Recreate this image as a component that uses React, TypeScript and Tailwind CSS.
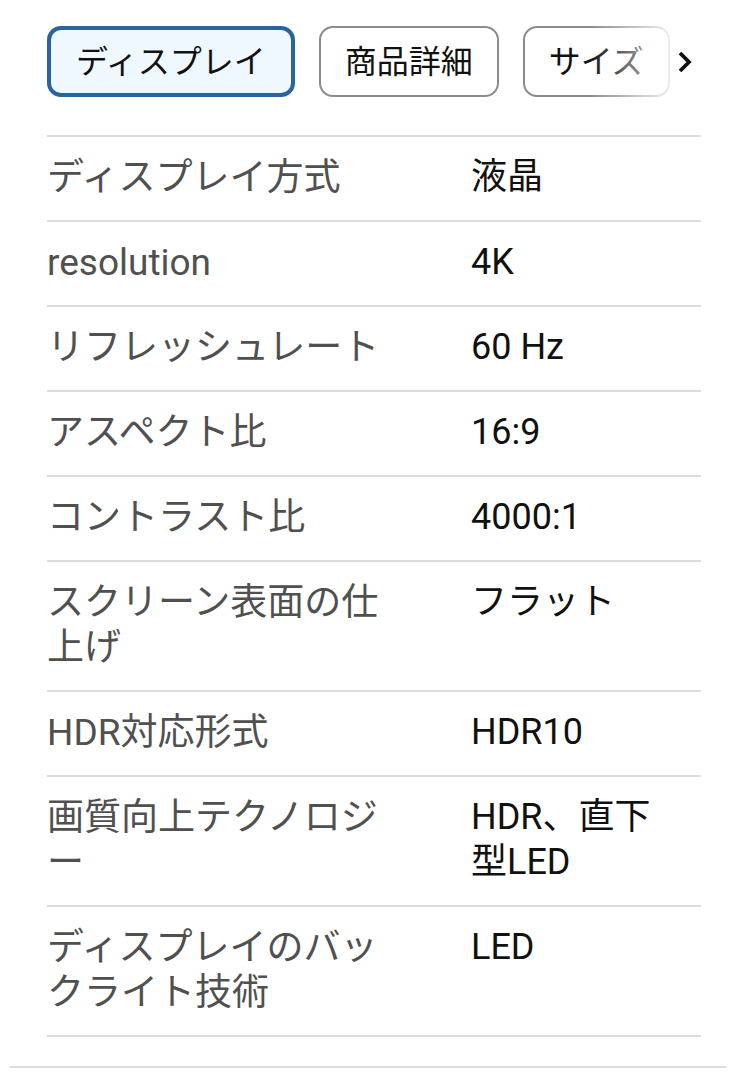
const rows: [string, string][] = [
  ["ディスプレイ方式", "液晶"],
  ["resolution", "4K"],
  ["リフレッシュレート", "60 Hz"],
  ["アスペクト比", "16:9"],
  ["コントラスト比", "4000:1"],
  ["スクリーン表面の仕上げ", "フラット"],
  ["HDR対応形式", "HDR10"],
  ["画質向上テクノロジー", "HDR、直下型LED"],
  ["ディスプレイのバックライト技術", "LED"],
];

export default function App() {
  return (
    <div
      className="min-h-screen w-[736px] bg-white text-[#111] overflow-hidden"
      style={{ fontFamily: 'Roboto, "Noto Sans CJK JP", sans-serif' }}
    >
      <div className="pl-[47px] pr-[35px] pt-[26px]">
        <div className="flex items-center gap-[24px] text-[32px] leading-none whitespace-nowrap">
          <button className="shrink-0 h-[71px] px-[25px] rounded-[14px] border-[4px] border-[#2a64a0] bg-[#eef8fe] text-[#111]">
            ディスプレイ
          </button>
          <button className="shrink-0 h-[71px] px-[24px] rounded-[14px] border-2 border-[#8c8c8c] bg-white text-[#111]">
            商品詳細
          </button>
          <div className="relative shrink-0">
            <button className="h-[71px] px-[24px] rounded-[14px] border-2 border-[#8c8c8c] bg-white text-[#111]">
              サイズ
            </button>
            <div className="absolute inset-y-0 right-0 w-[80px] bg-gradient-to-r from-white/0 to-white/85 pointer-events-none" />
          </div>
          <svg className="shrink-0 -ml-[17px]" width="16" height="26" viewBox="0 0 16 26">
            <path d="M3 4 L12 13 L3 22" fill="none" stroke="#111" strokeWidth="3.8" />
          </svg>
        </div>

        <div className="mt-[38px] border-t-2 border-[#dcdcdc]">
          {rows.map(([label, value]) => (
            <div key={label} className="flex border-b-2 border-[#dcdcdc] pt-[18px] pb-[20px] leading-[45px]">
              <div className="w-[424px] shrink-0 pr-[80px] text-[37px] text-[#505050]">{label}</div>
              <div className="w-[205px] text-[36px] text-[#111]">{value}</div>
            </div>
          ))}
        </div>
      </div>
      <div className="mx-[10px] mt-[29px] border-t-2 border-[#dcdcdc]" />
    </div>
  );
}
